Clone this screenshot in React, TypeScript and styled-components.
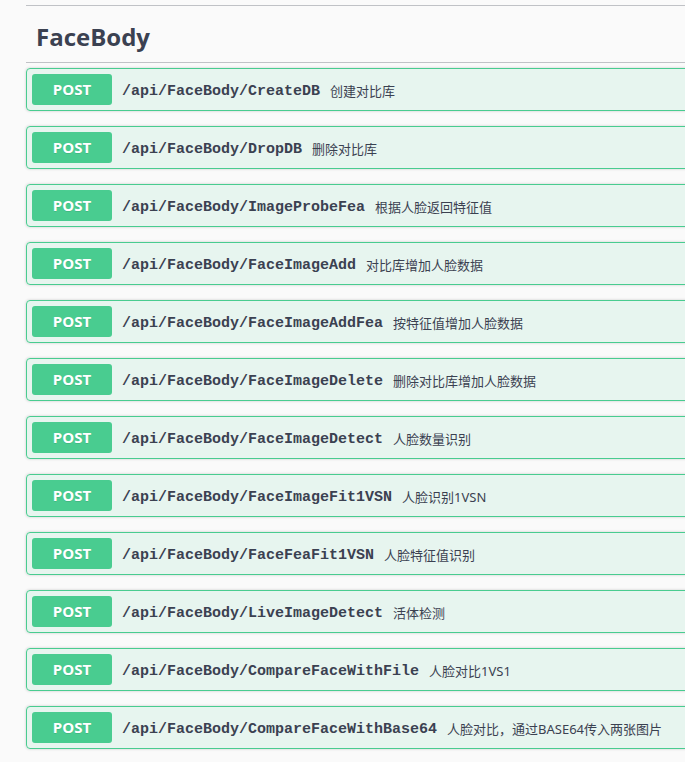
import React from "react";
import styled, { createGlobalStyle } from "styled-components";

const Global = createGlobalStyle`
  html, body {
    margin: 0;
    padding: 0;
    overflow: hidden;
    background: #fafafa;
  }
  body {
    font-family: "Open Sans", "Noto Sans", sans-serif;
    color: #3b4151;
  }
`;

const Page = styled.div`
  padding: 5px 0 0 26px;
  overflow: hidden;
`;

const Section = styled.section`
  width: calc(100% + 12px);
  border-top: 1px solid rgba(59, 65, 81, 0.3);
`;

const TagHeading = styled.h4`
  margin: 0 0 5px;
  padding: 13px 20px 7px 10px;
  line-height: 36px;
  font-size: 24px;
  font-weight: 700;
  font-family: "Open Sans", "Noto Sans", sans-serif;
  color: #3b4151;
  border-bottom: 1px solid rgba(59, 65, 81, 0.3);
`;

const OpBlock = styled.div`
  margin: 0 0 15px;
  border: 1px solid #49cc90;
  border-radius: 4px;
  background: rgba(73, 204, 144, 0.1);
  box-shadow: 0 0 3px rgba(0, 0, 0, 0.19);
`;

const Summary = styled.div`
  display: flex;
  align-items: center;
  padding: 5px;
`;

const Method = styled.span`
  box-sizing: border-box;
  min-width: 80px;
  height: 31px;
  padding: 6px 15px;
  border-radius: 3px;
  background: #49cc90;
  color: #fff;
  font-family: "Open Sans", "Noto Sans", sans-serif;
  font-size: 15px;
  font-weight: 700;
  line-height: 19px;
  text-align: center;
  text-shadow: 0 1px 0 rgba(0, 0, 0, 0.1);
`;

const Path = styled.span`
  padding: 3px 10px 0;
  font-family: "Liberation Mono", "DejaVu Sans Mono", monospace;
  font-size: 15px;
  font-weight: 700;
  color: #3b4151;
  white-space: nowrap;
`;

const Description = styled.span`
  padding-top: 1px;
  font-family: "Noto Sans", "Noto Sans CJK SC", sans-serif;
  font-size: 13px;
  color: #3b4151;
  white-space: nowrap;
`;

const ops: [string, string][] = [
  ["CreateDB", "创建对比库"],
  ["DropDB", "删除对比库"],
  ["ImageProbeFea", "根据人脸返回特征值"],
  ["FaceImageAdd", "对比库增加人脸数据"],
  ["FaceImageAddFea", "按特征值增加人脸数据"],
  ["FaceImageDelete", "删除对比库增加人脸数据"],
  ["FaceImageDetect", "人脸数量识别"],
  ["FaceImageFit1VSN", "人脸识别1VSN"],
  ["FaceFeaFit1VSN", "人脸特征值识别"],
  ["LiveImageDetect", "活体检测"],
  ["CompareFaceWithFile", "人脸对比1VS1"],
  ["CompareFaceWithBase64", "人脸对比，通过BASE64传入两张图片"],
];

export default function App() {
  return (
    <>
      <Global />
      <Page>
        <Section>
          <TagHeading>FaceBody</TagHeading>
          {ops.map(([name, desc]) => (
            <OpBlock key={name}>
              <Summary>
                <Method>POST</Method>
                <Path>/api/FaceBody/{name}</Path>
                <Description>{desc}</Description>
              </Summary>
            </OpBlock>
          ))}
        </Section>
      </Page>
    </>
  );
}
